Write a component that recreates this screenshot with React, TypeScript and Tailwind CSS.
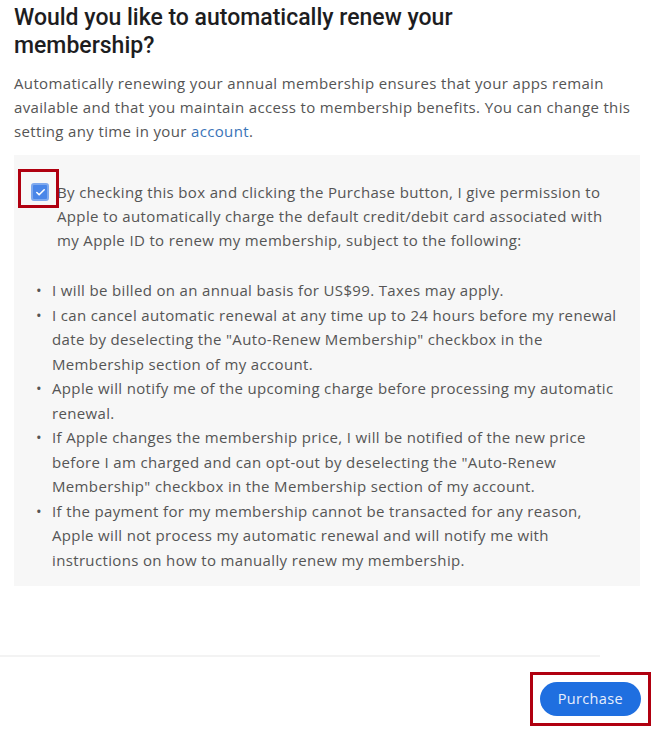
import { Check } from 'lucide-react'

const TERMS = [
  'I will be billed on an annual basis for US$99. Taxes may apply.',
  'I can cancel automatic renewal at any time up to 24 hours before my renewal date by deselecting the "Auto-Renew Membership" checkbox in the Membership section of my account.',
  'Apple will notify me of the upcoming charge before processing my automatic renewal.',
  'If Apple changes the membership price, I will be notified of the new price before I am charged and can opt-out by deselecting the "Auto-Renew Membership" checkbox in the Membership section of my account.',
  'If the payment for my membership cannot be transacted for any reason, Apple will not process my automatic renewal and will notify me with instructions on how to manually renew my membership.',
]

export default function App() {
  return (
    <div className="w-[656px] h-[736px] bg-white font-['Open_Sans',Arial,sans-serif] tracking-[0.35px] flex flex-col overflow-hidden">
      <div className="pl-[14px] pr-[16px] pt-[4px]">
        <h1 className="font-['Roboto',Arial,sans-serif] tracking-normal text-[23px] leading-[28px] font-medium text-[#1d1d1f] w-[470px]">
          Would you like to automatically renew your membership?
        </h1>
        <p className="mt-[11px] text-[15px] leading-[24px] text-[#555]">
          Automatically renewing your annual membership ensures that your apps remain available and that you maintain
          access to membership benefits. You can change this setting any time in your{' '}
          <a className="text-[#3a74b8]">account</a>.
        </p>
      </div>

      {/* Auto-renew consent panel */}
      <div className="mt-[12px] ml-[14px] mr-[16px] bg-[#f7f7f7] pt-[25px] pb-[14px] pr-[14px]">
        <div className="flex items-start">
          <div className="relative w-[43px] shrink-0 flex justify-end pr-[8px] pt-[3px]">
            <div className="w-[18px] h-[18px] rounded-[3px] bg-[#4a86e8] border-2 border-[#7fa9ee] flex items-center justify-center">
              <Check size={11} strokeWidth={3.5} className="text-white" />
            </div>
            <div className="absolute left-[4px] top-[-11px] w-[41px] h-[39px] border-[3px] border-[#b00010]" />
          </div>
          <p className="text-[15px] leading-[24px] text-[#555]">
            By checking this box and clicking the Purchase button, I give permission to Apple to automatically charge the
            default credit/debit card associated with my Apple ID to renew my membership, subject to the following:
          </p>
        </div>

        <ul className="mt-[26px] pl-[22px]">
          {TERMS.map(t => (
            <li key={t} className="flex text-[15px] leading-[24.5px] text-[#555]">
              <span className="w-[16px] shrink-0">•</span>
              <span>{t}</span>
            </li>
          ))}
        </ul>
      </div>

      <div className="mt-[69px] h-[2px] w-[600px] bg-[#f3f3f3]" />

      <div className="flex justify-end pr-[5px] mt-[15px]">
        <div className="border-[3px] border-[#b00010] px-[7px] py-[7px]">
          <button className="h-[34px] px-[18px] rounded-full bg-[#1f6fe0] text-[14.5px] text-[#e8eefc]">
            Purchase
          </button>
        </div>
      </div>
    </div>
  )
}
